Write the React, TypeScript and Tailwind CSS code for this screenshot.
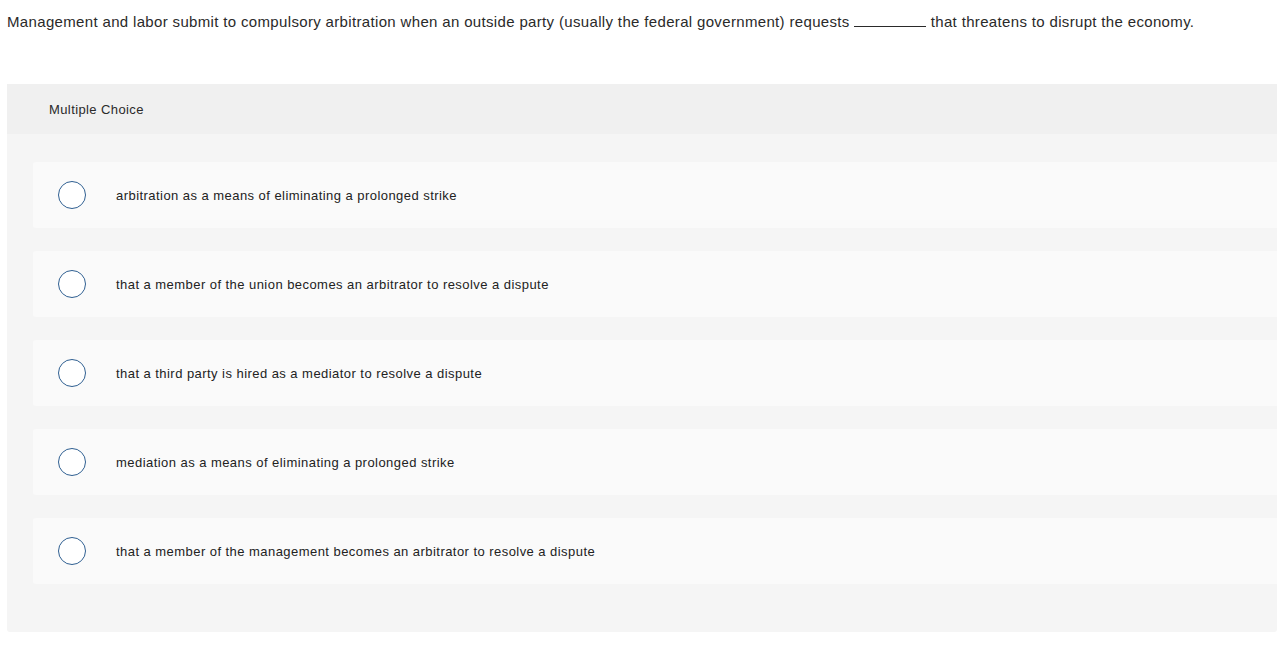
import { useState } from "react";

const options = [
  "arbitration as a means of eliminating a prolonged strike",
  "that a member of the union becomes an arbitrator to resolve a dispute",
  "that a third party is hired as a mediator to resolve a dispute",
  "mediation as a means of eliminating a prolonged strike",
  "that a member of the management becomes an arbitrator to resolve a dispute",
];

export default function App() {
  const [picked, setPicked] = useState<number | null>(null);

  return (
    <div className="min-h-screen bg-white font-['Liberation_Sans',Arial,sans-serif] text-[#2a2a2a]">
      <p className="px-[7px] pt-[12px] text-[15px] leading-[20px] tracking-[0.34px]">
        Management and labor submit to compulsory arbitration when an outside party (usually the federal government) requests{" "}
        <span className="inline-block w-[72px] border-b border-[#2a2a2a] align-baseline" />{" "}
        that threatens to disrupt the economy.
      </p>

      <section className="mt-[52px] ml-[7px] rounded-b-[3px] bg-[#f5f5f5]">
        <div className="flex h-[50px] items-center bg-[#f0f0f0] pt-[1px] pl-[42px] text-[13px] tracking-[0.4px]">
          Multiple Choice
        </div>

        <div className="flex flex-col gap-[23px] pt-[28px] pb-[48px] pl-[26px]">
          {options.map((text, i) => (
            <label
              key={i}
              onClick={() => setPicked(i)}
              className="flex h-[66px] cursor-pointer items-center rounded-l-[3px] bg-[#fafafa] pl-[25px]"
            >
              <span className="flex h-[28px] w-[28px] shrink-0 items-center justify-center rounded-full border-[1.5px] border-[#2f5f91] bg-white">
                {picked === i && <span className="h-[14px] w-[14px] rounded-full bg-[#2f5f91]" />}
              </span>
              <span className="ml-[30px] pt-[1px] text-[13px] tracking-[0.45px] text-[#222]">{text}</span>
            </label>
          ))}
        </div>
      </section>
    </div>
  );
}
